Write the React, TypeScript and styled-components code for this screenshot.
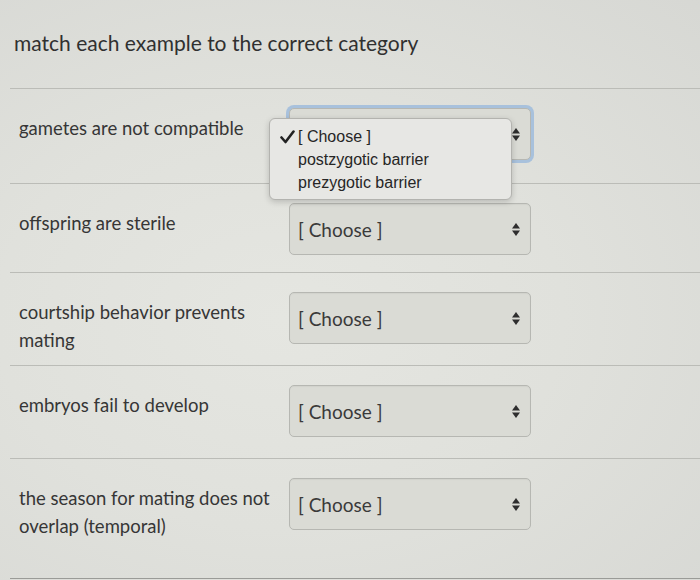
import React from "react";
import styled, { createGlobalStyle } from "styled-components";

const Global = createGlobalStyle`
  html, body { margin: 0; padding: 0; }
  body {
    width: 700px;
    height: 580px;
    overflow: hidden;
    background: radial-gradient(ellipse 90% 80% at 40% 55%, #e5e6e1 0%, #e0e1dc 45%, #d6d7d3 100%);
    font-family: Lato, "Open Sans", sans-serif;
    color: #333;
  }
`;

const Page = styled.div`
  margin-left: 10px;
  display: flex;
  flex-direction: column;
`;

const Header = styled.div`
  padding: 30px 0 33px 4px;
  border-bottom: 1px solid #bbbcb7;
`;

const Title = styled.h1`
  margin: 0;
  font-size: 21px;
  line-height: 25px;
  font-weight: 400;
  color: #303030;
`;

const Row = styled.div<{ $h: number; $last?: boolean }>`
  position: relative;
  height: ${(p) => p.$h}px;
  box-sizing: border-box;
  display: grid;
  grid-template-columns: 270px 242px;
  align-items: start;
  padding: 19px 0 0 9px;
  border-bottom: 1px solid ${(p) => (p.$last ? "#9a9b97" : "#bbbcb7")};
`;

const Label = styled.div`
  padding-top: 6px;
  font-size: 18.5px;
  line-height: 28px;
  color: #363636;
`;

const SelectBox = styled.div<{ $focus?: boolean }>`
  position: relative;
  height: 52px;
  box-sizing: border-box;
  display: flex;
  align-items: center;
  justify-content: space-between;
  padding: 0 10px 0 8px;
  background: #dadbd5;
  border: 1px solid #b6b7b2;
  border-radius: 5px;
  font-size: 19px;
  color: #3a3a3a;
  box-shadow: ${(p) => (p.$focus ? "0 0 0 3px #a8c1dc" : "inset 0 1px 1px rgba(0,0,0,0.04)")};
`;

const Value = styled.span<{ $hidden?: boolean }>`
  visibility: ${(p) => (p.$hidden ? "hidden" : "visible")};
`;

const Menu = styled.div`
  position: absolute;
  left: -21px;
  top: 9px;
  width: 243px;
  height: 82px;
  box-sizing: border-box;
  padding: 6px 0 0 10px;
  background: #e7e7e4;
  border: 1px solid #b3b3af;
  border-radius: 6px;
  box-shadow: 0 2px 6px rgba(0, 0, 0, 0.18);
  font-family: "Liberation Sans", Arial, sans-serif;
  font-size: 16px;
  color: #262626;
  z-index: 2;
`;

const Item = styled.div`
  display: grid;
  grid-template-columns: 18px auto;
  align-items: center;
  height: 23px;
  line-height: 23px;
`;

const Arrows = () => (
  <svg width="8" height="13" viewBox="0 0 8 13">
    <path d="M4 0 L8 5.5 L0 5.5 Z" fill="#2e2e2e" />
    <path d="M0 7.5 L8 7.5 L4 13 Z" fill="#2e2e2e" />
  </svg>
);

const Check = () => (
  <svg width="15" height="14" viewBox="0 0 15 14">
    <path d="M1.5 7.5 L5.5 12 L13.5 1.5" fill="none" stroke="#222" strokeWidth="2.6" strokeLinecap="round" strokeLinejoin="round" />
  </svg>
);

const rows = [
  { label: "gametes are not compatible", h: 95, open: true },
  { label: "offspring are sterile", h: 89 },
  { label: "courtship behavior prevents mating", h: 93 },
  { label: "embryos fail to develop", h: 93 },
  { label: "the season for mating does not overlap (temporal)", h: 120, last: true },
];

export default function App() {
  return (
    <>
      <Global />
      <Page>
        <Header>
          <Title>match each example to the correct category</Title>
        </Header>
        {rows.map((r) => (
          <Row key={r.label} $h={r.h} $last={r.last}>
            <Label>{r.label}</Label>
            <SelectBox $focus={r.open}>
              <Value $hidden={r.open}>[ Choose ]</Value>
              <Arrows />
              {r.open && (
                <Menu>
                  <Item>
                    <Check />
                    <span>[ Choose ]</span>
                  </Item>
                  <Item>
                    <span />
                    <span>postzygotic barrier</span>
                  </Item>
                  <Item>
                    <span />
                    <span>prezygotic barrier</span>
                  </Item>
                </Menu>
              )}
            </SelectBox>
          </Row>
        ))}
      </Page>
    </>
  );
}
